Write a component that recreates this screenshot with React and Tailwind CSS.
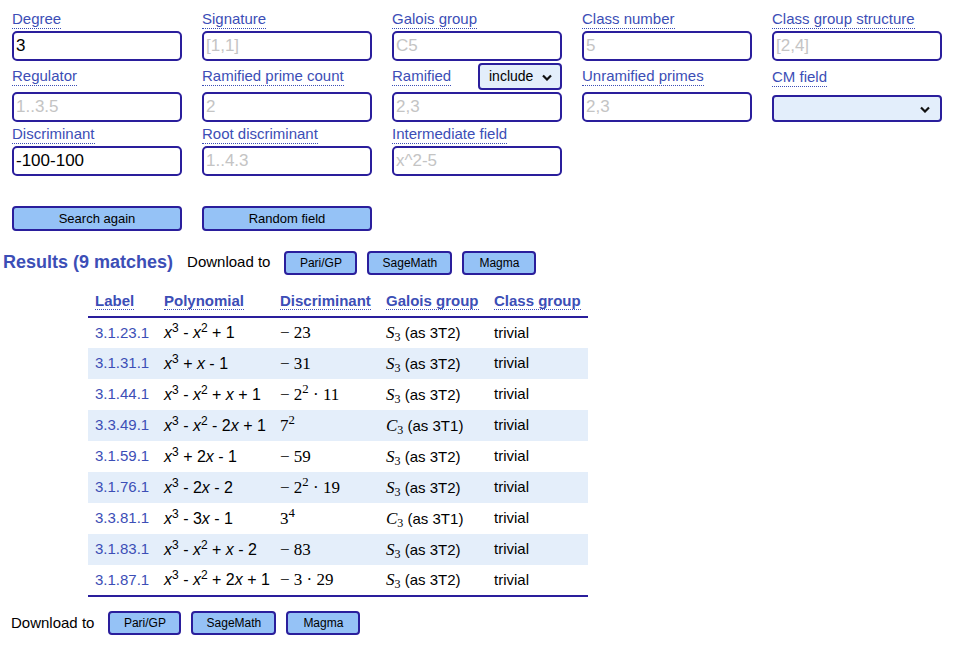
import { useState } from 'react'

const border = 'border-2 border-[#2a1e9c]'
const serif = "font-['Liberation_Serif','DejaVu_Serif',serif]"

function Label({ children }) {
  return (
    <span className="text-[15px] leading-[18px] text-[#3c4eb6] border-b border-dotted border-[#3c4eb6] whitespace-nowrap">
      {children}
    </span>
  )
}

function Chevron({ className }) {
  return (
    <svg className={className} width="10" height="7" viewBox="0 0 10 7">
      <path d="M1 1.5 L5 5.5 L9 1.5" fill="none" stroke="#111" strokeWidth="2.2" />
    </svg>
  )
}

function Field({ label, value, placeholder, extra, select }) {
  return (
    <div className="flex flex-col">
      <div className="flex-1 min-h-[24px] flex items-center justify-between">
        <Label>{label}</Label>
        {extra}
      </div>
      {select ? (
        <div className={`relative mt-px h-[27px] w-full ${border} rounded-[4px] bg-[#e3eefb]`}>
          <Chevron className="absolute right-[10px] top-[9px]" />
        </div>
      ) : (
        <input
          defaultValue={value}
          placeholder={placeholder}
          className={`h-[30px] w-full ${border} rounded-[5px] px-[2px] text-[17px] text-black bg-white placeholder:text-[#c4c4c4] outline-none`}
        />
      )}
    </div>
  )
}

function IncludeSelect() {
  return (
    <div className={`relative my-[2px] h-[27px] w-[84px] ${border} rounded-[4px] bg-[#e3eefb] flex items-center pl-[9px]`}>
      <span className="text-[14px] text-black">include</span>
      <Chevron className="absolute right-[8px] top-[9px]" />
    </div>
  )
}

function Btn({ children, className = '' }) {
  return (
    <button className={`${border} rounded-[4px] bg-[#95c2f6] text-black ${className}`}>
      {children}
    </button>
  )
}

function Downloads({ className = '' }) {
  return (
    <div className={`flex items-center ${className}`}>
      <span className="text-[15px] text-black">Download to</span>
      <div className="flex gap-[10px] ml-[14px]">
        <Btn className="w-[73px] h-[24px] text-[12px]">Pari/GP</Btn>
        <Btn className="w-[85px] h-[24px] text-[12px]">SageMath</Btn>
        <Btn className="w-[74px] h-[24px] text-[12px]">Magma</Btn>
      </div>
    </div>
  )
}

const X = () => <i>x</i>
const M = '−\u2005'

const rows = [
  { label: '3.1.23.1', poly: <><X /><sup>3</sup> - <X /><sup>2</sup> + 1</>, disc: <>{M}23</>, g: 'S', t: '3T2' },
  { label: '3.1.31.1', poly: <><X /><sup>3</sup> + <X /> - 1</>, disc: <>{M}31</>, g: 'S', t: '3T2' },
  { label: '3.1.44.1', poly: <><X /><sup>3</sup> - <X /><sup>2</sup> + <X /> + 1</>, disc: <>{M}2<sup>2</sup> · 11</>, g: 'S', t: '3T2' },
  { label: '3.3.49.1', poly: <><X /><sup>3</sup> - <X /><sup>2</sup> - 2<X /> + 1</>, disc: <>7<sup>2</sup></>, g: 'C', t: '3T1' },
  { label: '3.1.59.1', poly: <><X /><sup>3</sup> + 2<X /> - 1</>, disc: <>{M}59</>, g: 'S', t: '3T2' },
  { label: '3.1.76.1', poly: <><X /><sup>3</sup> - 2<X /> - 2</>, disc: <>{M}2<sup>2</sup> · 19</>, g: 'S', t: '3T2' },
  { label: '3.3.81.1', poly: <><X /><sup>3</sup> - 3<X /> - 1</>, disc: <>3<sup>4</sup></>, g: 'C', t: '3T1' },
  { label: '3.1.83.1', poly: <><X /><sup>3</sup> - <X /><sup>2</sup> + <X /> - 2</>, disc: <>{M}83</>, g: 'S', t: '3T2' },
  { label: '3.1.87.1', poly: <><X /><sup>3</sup> - <X /><sup>2</sup> + 2<X /> + 1</>, disc: <>{M}3 · 29</>, g: 'S', t: '3T2' },
]

export default function App() {
  const [q] = useState(null)

  return (
    <div className="w-[968px] h-[654px] bg-white font-['Liberation_Sans',Arial,sans-serif] text-black">
      {/* ── Search form ── */}
      <div className="pl-3 pt-[7px] flex flex-col">
        <div className="grid grid-cols-[repeat(5,170px)] gap-x-5">
          <Field label="Degree" value="3" />
          <Field label="Signature" placeholder="[1,1]" />
          <Field label="Galois group" placeholder="C5" />
          <Field label="Class number" placeholder="5" />
          <Field label="Class group structure" placeholder="[2,4]" />
        </div>
        <div className="grid grid-cols-[repeat(5,170px)] gap-x-5">
          <Field label="Regulator" placeholder="1..3.5" />
          <Field label="Ramified prime count" placeholder="2" />
          <Field label="Ramified" placeholder="2,3" extra={<IncludeSelect />} />
          <Field label="Unramified primes" placeholder="2,3" />
          <Field label="CM field" select />
        </div>
        <div className="grid grid-cols-[repeat(5,170px)] gap-x-5">
          <Field label="Discriminant" value="-100-100" />
          <Field label="Root discriminant" placeholder="1..4.3" />
          <Field label="Intermediate field" placeholder="x^2-5" />
        </div>
        <div className="flex gap-5 mt-[30px]">
          <Btn className="w-[170px] h-[25px] text-[13px]">Search again</Btn>
          <Btn className="w-[170px] h-[25px] text-[13px]">Random field</Btn>
        </div>
      </div>

      {/* ── Results ── */}
      <div className="flex items-center mt-[18px] pl-[3px]">
        <h2 className="text-[18px] font-bold text-[#3c4eb6] mr-[14px]">Results (9 matches)</h2>
        <Downloads />
      </div>

      <table className="ml-[88px] mt-[10px] w-[500px] table-fixed border-collapse text-[15px]">
        <colgroup>
          <col className="w-[69px]" />
          <col className="w-[116px]" />
          <col className="w-[106px]" />
          <col className="w-[108px]" />
          <col className="w-[101px]" />
        </colgroup>
        <thead>
          <tr className="border-b-2 border-[#2a1e9c] h-[31px]">
            {['Label', 'Polynomial', 'Discriminant', 'Galois group', 'Class group'].map((h) => (
              <th key={h} className="text-left font-bold px-[7px] align-middle whitespace-nowrap">
                <span className="text-[#3c4eb6] border-b border-dotted border-[#3c4eb6] leading-[17px]">{h}</span>
              </th>
            ))}
          </tr>
        </thead>
        <tbody className="border-b-2 border-[#2a1e9c]">
          {rows.map((r, i) => (
            <tr key={r.label} className={`h-[31px] ${i % 2 ? 'bg-[#e4eefa]' : 'bg-white'}`}>
              <td className="px-[7px] text-[#3c4eb6] whitespace-nowrap">{r.label}</td>
              <td className="px-[7px] text-[16px] whitespace-nowrap">{r.poly}</td>
              <td className={`px-[7px] text-[17px] whitespace-nowrap ${serif}`}>{r.disc}</td>
              <td className="px-[7px] whitespace-nowrap">
                <span className={`${serif} text-[17px] italic`}>{r.g}</span>
                <span className={`${serif} text-[12px] relative top-[3px]`}>3</span>
                {' '}(as {r.t})
              </td>
              <td className="px-[7px]">trivial</td>
            </tr>
          ))}
        </tbody>
      </table>

      <Downloads className="mt-[14px] pl-[11px]" />
    </div>
  )
}
